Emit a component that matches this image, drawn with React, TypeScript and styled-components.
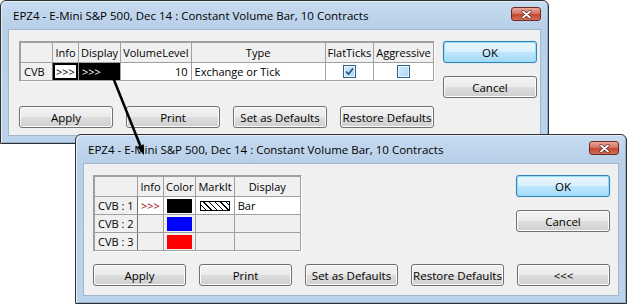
import React, { FC, ReactNode } from 'react'
import styled, { createGlobalStyle } from 'styled-components'

const GlobalStyle = createGlobalStyle`
  html, body {
    margin: 0;
    padding: 0;
    background: #ffffff;
  }
  body {
    font-family: "Open Sans", "Noto Sans", sans-serif;
    color: #000000;
  }
`

const Desktop = styled.div`
  position: relative;
  width: 630px;
  height: 305px;
  overflow: hidden;
  background: #ffffff;
`

type FrameProps = { $left: number; $top: number; $width: number; $height: number }

// windows sit on a free desktop, so they are placed by coordinates
const Frame = styled.div<FrameProps>`
  position: absolute;
  left: ${({ $left }) => $left}px;
  top: ${({ $top }) => $top}px;
  width: ${({ $width }) => $width}px;
  height: ${({ $height }) => $height}px;
  box-sizing: border-box;
  display: flex;
  flex-direction: column;
  border: 1px solid #303030;
  border-radius: 6px 6px 0 0;
  background: linear-gradient(#c7dbf0, #b8cfe8 28px, #bdd3eb);
  box-shadow: inset 1px 1px 0 #e4eef9, inset -1px -1px 0 #8fb0d2;
  padding: 0 7px 7px;
`

const TitleBar = styled.div`
  height: 28px;
  flex: none;
  display: flex;
  align-items: center;
  justify-content: space-between;
  padding-left: 5px;
  font-size: 11.5px;
`

const CloseButton = styled.div`
  width: 30px;
  height: 14px;
  margin-bottom: 2px;
  box-sizing: border-box;
  border: 1px solid #6d2b22;
  border-radius: 3px;
  background: linear-gradient(#e9a99c, #d47564 45%, #c4462f 55%, #d0705a);
  display: flex;
  align-items: center;
  justify-content: center;
`

const Client = styled.div<{ $pad: string }>`
  flex: 1;
  box-sizing: border-box;
  display: flex;
  flex-direction: column;
  background: #f0f0f0;
  border: 1px solid #9fb6cf;
  padding: ${({ $pad }) => $pad};
`

const TopRow = styled.div`
  display: flex;
  justify-content: space-between;
  align-items: flex-start;
`

const SideButtons = styled.div`
  display: flex;
  flex-direction: column;
  gap: 13px;
`

const ButtonRow = styled.div`
  margin-top: auto;
  display: flex;
  gap: 13px;
`

const Button = styled.div<{ $primary?: boolean }>`
  width: 94px;
  height: 22px;
  box-sizing: border-box;
  display: flex;
  align-items: center;
  justify-content: center;
  font-size: 11.5px;
  border-radius: 3px;
  border: 1px solid ${({ $primary }) => ($primary ? '#3c7fb1' : '#707070')};
  background: ${({ $primary }) => ($primary
    ? 'linear-gradient(#eaf6fd 0%, #d9f0fc 50%, #bee6fd 51%, #a7d9f5 100%)'
    : 'linear-gradient(#f2f2f2 0%, #ebebeb 50%, #dddddd 51%, #cfcfcf 100%)')};
  box-shadow: ${({ $primary }) => ($primary
    ? 'inset 0 0 0 1px #8ee0fb, 0 0 1px #48c8f5' : 'inset 0 0 0 1px #fcfcfc')};
`

const GridFrame = styled.div`
  border: 1px solid;
  border-color: #a0a0a0 #ffffff #ffffff #a0a0a0;
`

const Grid = styled.table`
  border-collapse: collapse;
  table-layout: fixed;
  font-size: 11px;
  border: 1px solid #6e6e6e;
`

const Head = styled.th<{ $w: number }>`
  width: ${({ $w }) => $w}px;
  height: 19px;
  padding: 0 2px;
  font-weight: normal;
  text-align: center;
  background: #f0f0f0;
  border: 1px solid #a0a0a0;
  white-space: nowrap;
  overflow: hidden;
`

const RowHead = styled.td`
  height: 17px;
  padding: 0 3px;
  background: #f0f0f0;
  border: 1px solid #a0a0a0;
  border-right-color: #6e6e6e;
  white-space: nowrap;
`

type CellProps = { $bg?: string; $color?: string; $align?: string; $selected?: boolean }

const Cell = styled.td<CellProps>`
  height: 17px;
  padding: 0 3px;
  box-sizing: border-box;
  background: ${({ $bg }) => $bg || '#ffffff'};
  color: ${({ $color }) => $color || '#000000'};
  text-align: ${({ $align }) => $align || 'left'};
  border: 1px solid #a0a0a0;
  white-space: nowrap;
  overflow: hidden;
  box-shadow: ${({ $selected }) => ($selected ? 'inset 0 0 0 2px #000000' : 'none')};
`

const Swatch = styled.div<{ $color: string }>`
  height: 14px;
  background: ${({ $color }) => $color};
`

const Hatch = styled.div`
  width: 30px;
  height: 10px;
  box-sizing: border-box;
  border: 1px solid #000000;
  background: repeating-linear-gradient(45deg, #ffffff 0 3px, #000000 3px 4px);
  margin: 0 auto;
`

const CheckBox = styled.div`
  width: 13px;
  height: 13px;
  box-sizing: border-box;
  margin: 0 auto;
  border: 1px solid #2c628b;
  background: linear-gradient(135deg, #d7ecfb, #a9d3f3);
  box-shadow: inset 0 0 0 1px #e9f4fd;
  display: flex;
  align-items: center;
  justify-content: center;
`

const Arrow = styled.svg`
  position: absolute;
  left: 0;
  top: 0;
  pointer-events: none;
`

const CloseIcon: FC = () => (
  <CloseButton>
    <svg width='11' height='9' viewBox='0 0 11 9'>
      <path d='M2 1.5 L9 7.5 M9 1.5 L2 7.5' stroke='#5a1d16' strokeWidth='3' strokeLinecap='round' />
      <path d='M2 1.5 L9 7.5 M9 1.5 L2 7.5' stroke='#ffffff' strokeWidth='1.8' strokeLinecap='round' />
    </svg>
  </CloseButton>
)

const TITLE = 'EPZ4 - E-Mini S&P 500, Dec 14 : Constant Volume Bar, 10 Contracts'

type WindowProps = FrameProps & { pad: string; children: ReactNode }

const DialogWindow: FC<WindowProps> = ({ pad, children, ...frame }) => (
  <Frame {...frame}>
    <TitleBar>
      <span>{TITLE}</span>
      <CloseIcon />
    </TitleBar>
    <Client $pad={pad}>{children}</Client>
  </Frame>
)

const BackTable: FC = () => (
  <GridFrame>
    <Grid>
      <thead>
        <tr>
          <Head $w={27} />
          <Head $w={21}>Info</Head>
          <Head $w={36}>Display</Head>
          <Head $w={61}>VolumeLevel</Head>
          <Head $w={129}>Type</Head>
          <Head $w={43}>FlatTicks</Head>
          <Head $w={53}>Aggressive</Head>
        </tr>
      </thead>
      <tbody>
        <tr>
          <RowHead>CVB</RowHead>
          <Cell $selected>&gt;&gt;&gt;</Cell>
          <Cell $bg='#000000' $color='#ffffff'>&gt;&gt;&gt;</Cell>
          <Cell $align='right'>10</Cell>
          <Cell>Exchange or Tick</Cell>
          <Cell>
            <CheckBox>
              <svg width='9' height='9' viewBox='0 0 9 9'>
                <path d='M1 4.5 L3.5 7 L8 1.5' fill='none' stroke='#214f7c' strokeWidth='1.6' />
              </svg>
            </CheckBox>
          </Cell>
          <Cell>
            <CheckBox />
          </Cell>
        </tr>
      </tbody>
    </Grid>
  </GridFrame>
)

const rows = [
  { name: 'CVB : 1', color: '#000000', active: true },
  { name: 'CVB : 2', color: '#0000ff', active: false },
  { name: 'CVB : 3', color: '#ff0000', active: false },
]

const FrontTable: FC = () => (
  <GridFrame>
    <Grid>
      <thead>
        <tr>
          <Head $w={38} />
          <Head $w={21}>Info</Head>
          <Head $w={27}>Color</Head>
          <Head $w={33}>MarkIt</Head>
          <Head $w={61}>Display</Head>
        </tr>
      </thead>
      <tbody>
        {rows.map(row => (
          <tr key={row.name}>
            <RowHead>{row.name}</RowHead>
            <Cell $bg={row.active ? '#ffffff' : '#f0f0f0'} $color='#9a0000'>
              {row.active ? '>>>' : ''}
            </Cell>
            <Cell $bg={row.active ? '#ffffff' : '#f0f0f0'}>
              <Swatch $color={row.color} />
            </Cell>
            <Cell $bg={row.active ? '#ffffff' : '#f0f0f0'}>
              {row.active && <Hatch />}
            </Cell>
            <Cell $bg={row.active ? '#ffffff' : '#f0f0f0'}>{row.active ? 'Bar' : ''}</Cell>
          </tr>
        ))}
      </tbody>
    </Grid>
  </GridFrame>
)

const App: FC = () => (
  <Desktop>
    <GlobalStyle />
    <DialogWindow $left={0} $top={0} $width={549} $height={144} pad='11px 3px 7px 10px'>
      <TopRow>
        <BackTable />
        <SideButtons>
          <Button $primary>OK</Button>
          <Button>Cancel</Button>
        </SideButtons>
      </TopRow>
      <ButtonRow>
        <Button>Apply</Button>
        <Button>Print</Button>
        <Button>Set as Defaults</Button>
        <Button>Restore Defaults</Button>
      </ButtonRow>
    </DialogWindow>
    <DialogWindow $left={75} $top={134} $width={552} $height={170} pad='11px 8px 9px 9px'>
      <TopRow>
        <FrontTable />
        <SideButtons>
          <Button $primary>OK</Button>
          <Button>Cancel</Button>
        </SideButtons>
      </TopRow>
      <ButtonRow>
        <Button>Apply</Button>
        <Button>Print</Button>
        <Button>Set as Defaults</Button>
        <Button>Restore Defaults</Button>
        <Button>&lt;&lt;&lt;</Button>
      </ButtonRow>
    </DialogWindow>
    <Arrow width='630' height='305' viewBox='0 0 630 305'>
      <line x1='110' y1='70' x2='140.3' y2='145.7' stroke='#000000' strokeWidth='2.5' />
      <polygon points='144,155 143.8,144.3 136.8,147.1' fill='#000000' />
    </Arrow>
  </Desktop>
)

export default App
